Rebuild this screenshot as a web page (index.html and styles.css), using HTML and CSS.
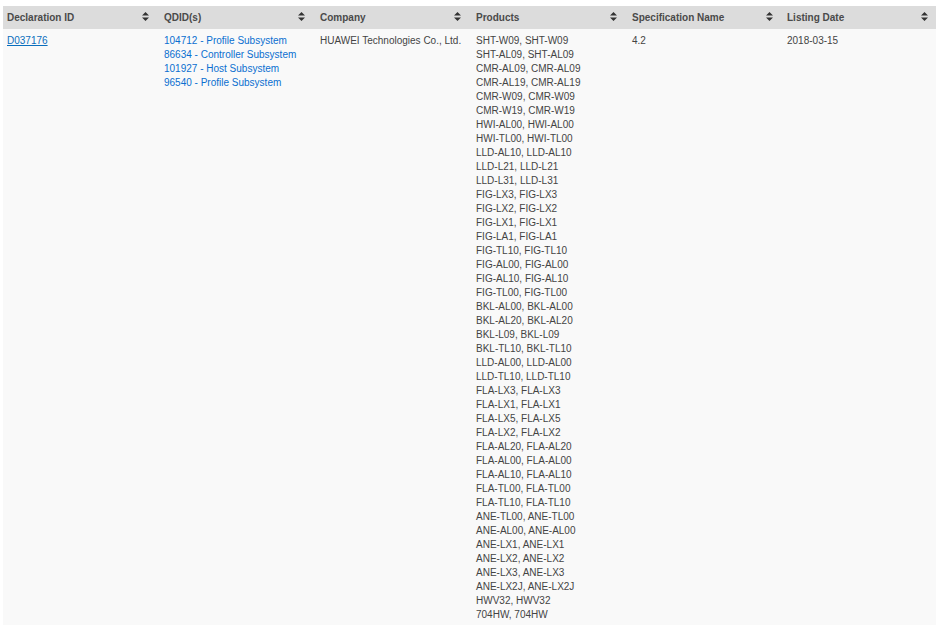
FILE: index.html
```html
<!DOCTYPE html>
<html lang="en">
<head>
<meta charset="utf-8">
<title>Declarations</title>
<link rel="stylesheet" href="styles.css">
</head>
<body>
<table class="listing">
<thead>
<tr>
<th><div class="head head-first">Declaration ID<svg class="sort" viewBox="0 0 7 9"><path d="M3.5 0 7 3.6H0zM3.5 9 0 5.4h7z"/></svg></div></th>
<th><div class="head">QDID(s)<svg class="sort" viewBox="0 0 7 9"><path d="M3.5 0 7 3.6H0zM3.5 9 0 5.4h7z"/></svg></div></th>
<th><div class="head">Company<svg class="sort" viewBox="0 0 7 9"><path d="M3.5 0 7 3.6H0zM3.5 9 0 5.4h7z"/></svg></div></th>
<th><div class="head">Products<svg class="sort" viewBox="0 0 7 9"><path d="M3.5 0 7 3.6H0zM3.5 9 0 5.4h7z"/></svg></div></th>
<th><div class="head">Specification Name<svg class="sort" viewBox="0 0 7 9"><path d="M3.5 0 7 3.6H0zM3.5 9 0 5.4h7z"/></svg></div></th>
<th class="last"><div class="head head-last">Listing Date<svg class="sort" viewBox="0 0 7 9"><path d="M3.5 0 7 3.6H0zM3.5 9 0 5.4h7z"/></svg></div></th>
</tr>
</thead>
<tbody>
<tr>
<td class="first"><a class="decl" href="#">D037176</a></td>
<td>
<a class="qdid" href="#">104712 - Profile Subsystem</a>
<a class="qdid" href="#">86634 - Controller Subsystem</a>
<a class="qdid" href="#">101927 - Host Subsystem</a>
<a class="qdid" href="#">96540 - Profile Subsystem</a>
</td>
<td>HUAWEI Technologies Co., Ltd.</td>
<td>SHT-W09, SHT-W09<br>SHT-AL09, SHT-AL09<br>CMR-AL09, CMR-AL09<br>CMR-AL19, CMR-AL19<br>CMR-W09, CMR-W09<br>CMR-W19, CMR-W19<br>HWI-AL00, HWI-AL00<br>HWI-TL00, HWI-TL00<br>LLD-AL10, LLD-AL10<br>LLD-L21, LLD-L21<br>LLD-L31, LLD-L31<br>FIG-LX3, FIG-LX3<br>FIG-LX2, FIG-LX2<br>FIG-LX1, FIG-LX1<br>FIG-LA1, FIG-LA1<br>FIG-TL10, FIG-TL10<br>FIG-AL00, FIG-AL00<br>FIG-AL10, FIG-AL10<br>FIG-TL00, FIG-TL00<br>BKL-AL00, BKL-AL00<br>BKL-AL20, BKL-AL20<br>BKL-L09, BKL-L09<br>BKL-TL10, BKL-TL10<br>LLD-AL00, LLD-AL00<br>LLD-TL10, LLD-TL10<br>FLA-LX3, FLA-LX3<br>FLA-LX1, FLA-LX1<br>FLA-LX5, FLA-LX5<br>FLA-LX2, FLA-LX2<br>FLA-AL20, FLA-AL20<br>FLA-AL00, FLA-AL00<br>FLA-AL10, FLA-AL10<br>FLA-TL00, FLA-TL00<br>FLA-TL10, FLA-TL10<br>ANE-TL00, ANE-TL00<br>ANE-AL00, ANE-AL00<br>ANE-LX1, ANE-LX1<br>ANE-LX2, ANE-LX2<br>ANE-LX3, ANE-LX3<br>ANE-LX2J, ANE-LX2J<br>HWV32, HWV32<br>704HW, 704HW</td>
<td>4.2</td>
<td class="last">2018-03-15</td>
</tr>
</tbody>
</table>
</body>
</html>
```
FILE: styles.css
```css
html, body {
  margin: 0;
  padding: 0;
  background: #fff;
}
body {
  padding: 6px 0 0 3px;
  font-family: "Liberation Sans", Arial, sans-serif;
  font-size: 10px;
  line-height: 14px;
  color: #444;
}
.listing {
  width: 933px;
  table-layout: fixed;
  border-collapse: collapse;
  background: #f9f9f9;
}
th {
  width: 156px;
  padding: 0;
  background: #dcdcdc;
  text-align: left;
  font-weight: bold;
  color: #4a4a4a;
}
th.last {
  width: 153px;
}
.head {
  display: flex;
  align-items: center;
  justify-content: space-between;
  height: 23px;
  padding: 1px 10px 0 5px;
  box-sizing: border-box;
}
.head-first {
  padding-left: 4px;
}
.head-last {
  padding-left: 4px;
  padding-right: 8px;
}
.sort {
  width: 7px;
  height: 9px;
  margin-bottom: 3px;
  fill: #333;
  flex: none;
}
td {
  vertical-align: top;
  padding: 5px 5px 3px;
}
td.first,
td.last {
  padding-left: 4px;
}
.decl {
  color: #0a6ebd;
  text-decoration: underline;
}
.qdid {
  display: block;
  color: #0a6fd0;
  text-decoration: none;
}
```
